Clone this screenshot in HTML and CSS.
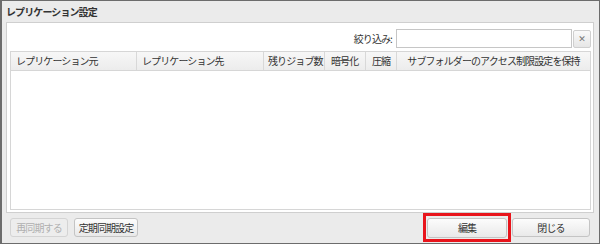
FILE: index.html
```html
<!DOCTYPE html>
<html lang="ja">
<head>
    <meta charset="UTF-8">
    <title>レプリケーション設定</title>
    <link rel="stylesheet" href="styles.css">
</head>
<body>
    <div class="window">
        <div class="title">レプリケーション設定</div>

        <div class="panel">
            <div class="filter">
                <label for="filterInput">絞り込み:</label>
                <input id="filterInput" type="text">
                <button class="clear" type="button">&#x2715;</button>
            </div>

            <div class="grid">
                <div class="grid-head">
                    <div class="col c1">レプリケーション元</div>
                    <div class="col c2">レプリケーション先</div>
                    <div class="col c3">残りジョブ数</div>
                    <div class="col c4">暗号化</div>
                    <div class="col c5">圧縮</div>
                    <div class="col c6">サブフォルダーのアクセス制限設定を保持</div>
                </div>
                <div class="grid-body"></div>
            </div>
        </div>

        <div class="footer">
            <button class="btn small" disabled>再同期する</button>
            <button class="btn small">定期同期設定</button>
            <div class="spacer"></div>
            <div class="highlight">
                <button class="btn wide">編集</button>
            </div>
            <button class="btn wide">閉じる</button>
        </div>
    </div>
</body>
</html>
```

FILE: styles.css
```css
* {
    box-sizing: border-box;
}

body {
    margin: 0;
    font-family: "Noto Sans CJK JP", "Noto Sans", sans-serif;
    font-size: 10px;
    letter-spacing: -0.9px;
    color: #333;
    background: #888;
}

.window {
    width: 600px;
    height: 244px;
    border: 1px solid #6c6c6c;
    border-left-width: 2px;
    background: #ebebeb;
    display: flex;
    flex-direction: column;
}

.title {
    height: 21px;
    line-height: 21px;
    padding-left: 4px;
    font-weight: bold;
    color: #333;
}

.panel {
    margin: 0 5px 0 4px;
    height: 192px;
    background: #fff;
    border: 1px solid #cfcfcf;
    padding: 6px 2px 2px 3px;
    display: flex;
    flex-direction: column;
}

.filter {
    display: flex;
    justify-content: flex-end;
    align-items: center;
    height: 19px;
    margin-bottom: 3px;
}

.filter label {
    margin-right: 4px;
}

.filter input {
    width: 176px;
    height: 19px;
    border: 1px solid #c6c6c6;
    padding: 0 3px;
    font-size: 10px;
    outline: none;
}

.clear {
    width: 18px;
    height: 18px;
    margin-left: 1px;
    border: 1px solid #cfcfcf;
    border-radius: 2px;
    background: linear-gradient(#fafafa, #e6e6e6);
    color: #777;
    font-size: 9px;
    font-weight: bold;
    padding: 0;
    font-family: "DejaVu Sans", sans-serif;
    letter-spacing: 0;
}

.grid {
    flex: 1;
    border: 1px solid #d6d6d6;
    display: flex;
    flex-direction: column;
}

.grid-head {
    display: flex;
    height: 19px;
    background: linear-gradient(#f7f7f7, #ececec);
    border-bottom: 1px solid #d6d6d6;
}

.col {
    flex-shrink: 0;
    line-height: 18px;
    padding-left: 5px;
    border-right: 1px solid #d8d8d8;
    white-space: nowrap;
}

.c1 { width: 126px; }
.c2 { width: 127px; }
.c3 { width: 61px; padding-left: 4px; }
.c4 { width: 41px; padding-left: 6px; }
.c5 { width: 31px; padding-left: 6px; }
.c6 { flex: 1; flex-shrink: 1; border-right: none; text-align: center; padding-left: 0; }

.grid-body {
    flex: 1;
}

.footer {
    flex: 1;
    display: flex;
    align-items: center;
    padding: 0 9px 1px 8px;
}

.btn {
    flex-shrink: 0;
    height: 19px;
    border: 1px solid #c4c4c4;
    border-radius: 3px;
    background: linear-gradient(#fcfcfc, #e9e9e9);
    font-family: "Noto Sans CJK JP", sans-serif;
    font-size: 10px;
    letter-spacing: -0.9px;
    color: #333;
    padding: 0;
}

.btn:disabled {
    color: #b0b0b0;
    border-color: #d4d4d4;
    background: #ededed;
}

.small {
    width: 58px;
    margin-right: 6px;
}

.small + .small {
    width: 64px;
}

.spacer {
    flex: 1;
}

.highlight {
    flex-shrink: 0;
    border: 3px solid #e8141b;
    width: 88px;
    height: 29px;
    display: flex;
    justify-content: center;
    align-items: center;
    margin-right: 1px;
}

.highlight .btn {
    width: 80px;
    height: 20px;
}

.wide {
    width: 78px;
}
```
